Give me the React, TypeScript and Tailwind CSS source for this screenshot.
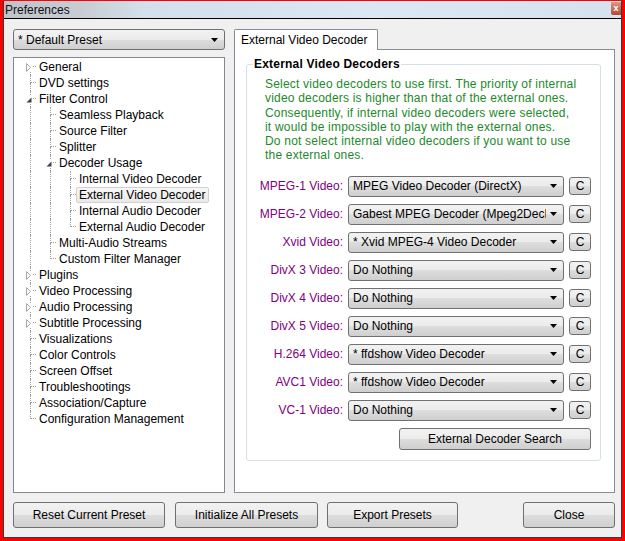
import React from 'react';

const font = "font-['Liberation_Sans',Arial,sans-serif] text-[12px]";
const vistaBg =
  'bg-[linear-gradient(to_bottom,#f2f2f2_0%,#ebebeb_50%,#dddddd_50%,#cfcfcf_100%)]';

type TreeNode = {
  t: string;
  lv: number;
  ex?: 'open' | 'closed';
  last?: boolean;
  first?: boolean;
  sel?: boolean;
};

const tree: TreeNode[] = [
  { t: 'General', lv: 0, ex: 'closed', first: true },
  { t: 'DVD settings', lv: 0 },
  { t: 'Filter Control', lv: 0, ex: 'open' },
  { t: 'Seamless Playback', lv: 1 },
  { t: 'Source Filter', lv: 1 },
  { t: 'Splitter', lv: 1 },
  { t: 'Decoder Usage', lv: 1, ex: 'open' },
  { t: 'Internal Video Decoder', lv: 2 },
  { t: 'External Video Decoder', lv: 2, sel: true },
  { t: 'Internal Audio Decoder', lv: 2 },
  { t: 'External Audio Decoder', lv: 2, last: true },
  { t: 'Multi-Audio Streams', lv: 1 },
  { t: 'Custom Filter Manager', lv: 1, last: true },
  { t: 'Plugins', lv: 0, ex: 'closed' },
  { t: 'Video Processing', lv: 0, ex: 'closed' },
  { t: 'Audio Processing', lv: 0, ex: 'closed' },
  { t: 'Subtitle Processing', lv: 0, ex: 'closed' },
  { t: 'Visualizations', lv: 0 },
  { t: 'Color Controls', lv: 0 },
  { t: 'Screen Offset', lv: 0 },
  { t: 'Troubleshootings', lv: 0 },
  { t: 'Association/Capture', lv: 0 },
  { t: 'Configuration Management', lv: 0, last: true },
];

const decoders: [string, string][] = [
  ['MPEG-1 Video:', 'MPEG Video Decoder (DirectX)'],
  ['MPEG-2 Video:', 'Gabest MPEG Decoder (Mpeg2DecFilter)'],
  ['Xvid Video:', '* Xvid MPEG-4 Video Decoder'],
  ['DivX 3 Video:', 'Do Nothing'],
  ['DivX 4 Video:', 'Do Nothing'],
  ['DivX 5 Video:', 'Do Nothing'],
  ['H.264 Video:', '* ffdshow Video Decoder'],
  ['AVC1 Video:', '* ffdshow Video Decoder'],
  ['VC-1 Video:', 'Do Nothing'],
];

function Arrow() {
  return (
    <svg width="7" height="4" viewBox="0 0 7 4" className="shrink-0">
      <path d="M0 0h7L3.5 4z" fill="#000" />
    </svg>
  );
}

function Combo({ text, className = '' }: { text: string; className?: string }) {
  return (
    <div
      className={`flex h-[21px] items-center gap-[4px] rounded-[3px] border border-[#707070] pl-[4px] pr-[6px] ${vistaBg} ${className}`}
    >
      <span className="flex-1 overflow-hidden whitespace-nowrap">{text}</span>
      <Arrow />
    </div>
  );
}

function Button({ children, className = '' }: { children: React.ReactNode; className?: string }) {
  return (
    <div
      className={`flex items-center justify-center rounded-[3px] border border-[#707070] ${vistaBg} ${className}`}
    >
      {children}
    </div>
  );
}

function Expander({ open }: { open: boolean }) {
  return (
    <svg
      width="7"
      height="9"
      viewBox="0 0 7 9"
      className="absolute left-[6px] top-[4px]"
    >
      <rect x="0" y="0" width="6" height="9" fill="#fff" />
      {open ? (
        <path d="M5.5 2.5v5h-5z" fill="#404040" />
      ) : (
        <path d="M0.5 0.5L4.5 4.5L0.5 8.5z" fill="#fff" stroke="#a6a6a6" />
      )}
    </svg>
  );
}

function TreeRow({ n }: { n: TreeNode }) {
  const ancestors = Array.from({ length: n.lv });
  return (
    <div className="flex h-[16px] items-stretch">
      {ancestors.map((_, i) => (
        <div key={i} className="w-[20px] shrink-0">
          <div className="ml-[10px] h-full border-l border-dotted border-[#a0a0a0]" />
        </div>
      ))}
      <div className="relative w-[16px] shrink-0">
        <div
          className={`ml-[10px] h-[8px] w-[6px] border-b border-dotted border-[#a0a0a0] ${
            n.first ? '' : 'border-l'
          }`}
        />
        <div
          className={`ml-[10px] h-[8px] border-dotted border-[#a0a0a0] ${n.last ? '' : 'border-l'}`}
        />
        {n.ex && <Expander open={n.ex === 'open'} />}
      </div>
      <span
        className={`flex items-center whitespace-nowrap rounded-[2px] border px-[2px] leading-[14px] ${
          n.sel
            ? 'border-[#d0d0d0] bg-[linear-gradient(to_bottom,#f7f7f7,#e9e9e9)]'
            : 'border-transparent'
        }`}
      >
        {n.t}
      </span>
    </div>
  );
}

export default function App() {
  return (
    <div className={`h-[541px] w-[625px] bg-[#ff0000] pb-[3px] pl-[3px] pr-[3px] pt-[1px] text-black ${font}`}>
      <div className="flex h-full flex-col border-x border-b border-[#3a3a3a]">
        {/* Title bar */}
        <div className="flex h-[18px] items-center justify-between border-b border-black bg-[linear-gradient(to_right,#bfc4ca_0%,#c8cdd3_13%,#d3dfea_22%,#dbe7f2_60%,#d6e3ef_100%)] pl-[1px]">
          <span className="leading-[16px] text-[#111]">Preferences</span>
          <div className="mb-[2px] flex h-[13px] w-[10px] items-center justify-center rounded-bl-[2px] bg-[linear-gradient(to_bottom,#dd9a82,#b8452d)] text-[9px] font-bold leading-none text-white">
            x
          </div>
        </div>

        {/* Body */}
        <div className="flex flex-1 flex-col bg-[#f0f0f0] pb-[8px] pl-[9px] pr-[6px] pt-[10px]">
          <div className="flex h-[464px] gap-[9px]">
            {/* Left column */}
            <div className="flex w-[212px] shrink-0 flex-col gap-[7px]">
              <Combo text="* Default Preset" />
              <div className="h-[436px] border border-[#828790] bg-white pl-[6px] pt-[1px]">
                {tree.map((n) => (
                  <TreeRow key={n.t} n={n} />
                ))}
              </div>
            </div>

            {/* Right column */}
            <div className="flex flex-1 flex-col">
              <div className="relative z-10 flex h-[21px] w-[144px] items-center rounded-t-[2px] border-x border-t border-[#898c95] bg-white pl-[6px]">
                External Video Decoder
              </div>
              <div className="-mt-[1px] flex h-[444px] flex-col border border-[#898c95] bg-white">
                <div className="ml-[11px] mr-[13px] mt-[14px] flex flex-col rounded-[3px] border border-[#d5dfe5] pb-[10px] pr-[9px]">
                  <div className="-mt-[9px] ml-[6px] w-fit bg-white px-[1px] font-bold leading-[16px] tracking-[0.2px]">
                    External Video Decoders
                  </div>
                  <div className="mt-[5px] pl-[18px] leading-[14.3px] tracking-[0.2px] text-[#22892a]">
                    Select video decoders to use first. The priority of internal
                    <br />
                    video decoders is higher than that of the external ones.
                    <br />
                    Consequently, if internal video decoders were selected,
                    <br />
                    it would be impossible to play with the external ones.
                    <br />
                    Do not select internal video decoders if you want to use
                    <br />
                    the external ones.
                  </div>
                  <div className="mt-[13px] flex flex-col gap-[7px]">
                    {decoders.map(([label, value]) => (
                      <div key={label} className="flex h-[21px] items-center">
                        <span className="flex-1 pr-[5px] text-right text-[#800080]">{label}</span>
                        <Combo text={value} className="w-[216px]" />
                        <Button className="ml-[5px] h-[18px] w-[22px]">C</Button>
                      </div>
                    ))}
                  </div>
                  <Button className="mt-[7px] h-[22px] w-[192px] self-end">External Decoder Search</Button>
                </div>
              </div>
            </div>
          </div>

          {/* Bottom buttons */}
          <div className="mt-[9px] flex h-[26px] items-stretch">
            <Button className="w-[152px]">Reset Current Preset</Button>
            <Button className="ml-[10px] w-[143px]">Initialize All Presets</Button>
            <Button className="ml-[9px] w-[131px]">Export Presets</Button>
            <Button className="ml-auto w-[92px]">Close</Button>
          </div>
        </div>
      </div>
    </div>
  );
}
